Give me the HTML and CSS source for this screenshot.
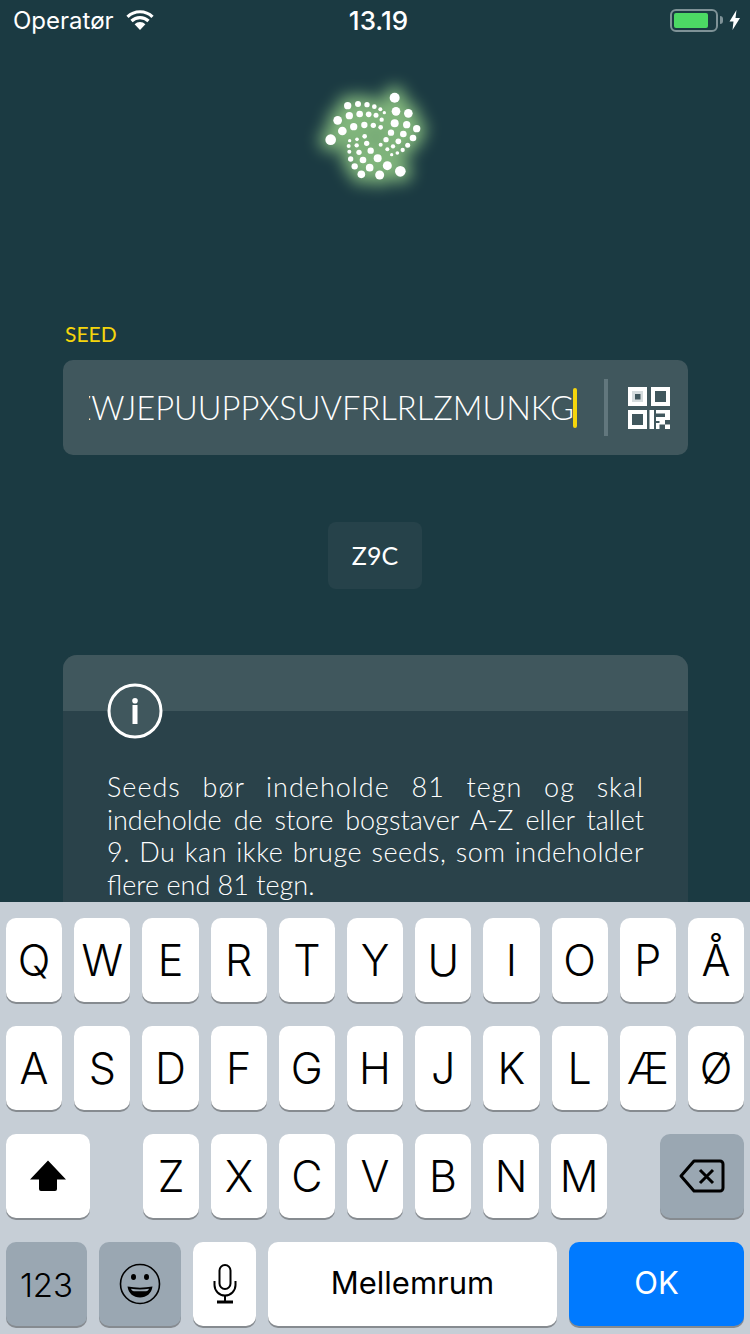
FILE: index.html
```html
<!DOCTYPE html>
<html lang="da">
<head>
    <meta charset="UTF-8">
    <meta name="viewport" content="width=device-width, initial-scale=1.0">
    <title>Seed</title>
    <link rel="stylesheet" href="styles.css">
</head>
<body>
    <div class="screen">
        <div class="statusbar">
            <div class="status-left">
                <span>Operatør</span>
                <svg class="wifi" width="28" height="20" viewBox="0 0 28 20">
                    <path d="M14 20 8.600 14.200a7.600 7.600 0 0 1 10.800 0z" fill="#fff"/>
                    <path d="M1.500 6.800a18 18 0 0 1 25 0M5.500 11a12.300 12.300 0 0 1 17 0" fill="none" stroke="#fff" stroke-width="3.200"/>
                </svg>
            </div>
            <div class="status-time">13.19</div>
            <div class="status-right">
                <div class="battery"><div class="battery-fill"></div></div>
                <div class="battery-tip"></div>
                <svg class="bolt" width="12" height="20" viewBox="0 0 12 20">
                    <path d="M7.500 0 .5 11.500h4L3.500 20 11 8H6.500z" fill="#fff"/>
                </svg>
            </div>
        </div>

        <div class="logo">
            <!-- viewBox i 3x enheder -->
            <svg width="150" height="130" viewBox="0 0 450 390">
                <g id="logoGlow" class="logo-glow"></g>
                <g id="logoDots" class="logo-dots"></g>
            </svg>
        </div>

        <div class="seed-label">SEED</div>
        <div class="seed-box">
            <div class="seed-value"><span>ZWJEPUUPPXSUVFRLRLZMUNKG</span></div>
            <div class="caret"></div>
            <div class="seed-divider"></div>
            <svg class="qr" width="42" height="42" viewBox="0 0 42 42" fill="#fff">
                <path fill-rule="evenodd" d="M0 0h19v19H0zM23 0h19v19H23zM27 4v11h11V4zM0 23h19v19H0zM4 27v11h11V27z"/>
                <path d="M4 4h11v11H4z" fill="#d5dcde"/>
                <path d="M7 7h5.500v5.500H7z" fill="#40575d"/>
                <path d="M21.500 23h4.500v19h-4.500zM28 23h9v3.500h-9zM37 23h5v10h-5zM28 30h9v4h-9zM28 36h3.500v6H28zM31.500 34H37v3.500h-5.500zM37 37.500h5V42h-5z"/>
            </svg>
        </div>

        <div class="checksum-row">
            <div class="checksum">Z9C</div>
        </div>

        <div class="info-card">
            <div class="info-head">
                <svg class="info-icon" width="56" height="56" viewBox="0 0 56 56">
                    <circle cx="28" cy="28" r="26" fill="#40575d" stroke="#fff" stroke-width="3"/>
                    <circle cx="28" cy="17.700" r="2.800" fill="#fff"/>
                    <rect x="25.500" y="22" width="5" height="19" fill="#fff"/>
                </svg>
            </div>
            <p class="info-text">
                <span class="info-line line-wide">Seeds bør indeholde 81 tegn og skal</span>
                <span class="info-line">indeholde de store bogstaver A-Z eller tallet</span>
                <span class="info-line line-mid">9. Du kan ikke bruge seeds, som indeholder</span>
                <span class="info-line line-last">flere end 81 tegn.</span>
            </p>
        </div>

        <div class="keyboard">
            <div class="kb-row">
                <div class="key">Q</div><div class="key">W</div><div class="key">E</div><div class="key">R</div><div class="key">T</div>
                <div class="key">Y</div><div class="key">U</div><div class="key">I</div><div class="key">O</div><div class="key">P</div><div class="key">Å</div>
            </div>
            <div class="kb-row">
                <div class="key">A</div><div class="key">S</div><div class="key">D</div><div class="key">F</div><div class="key">G</div>
                <div class="key">H</div><div class="key">J</div><div class="key">K</div><div class="key">L</div><div class="key">Æ</div><div class="key">Ø</div>
            </div>
            <div class="kb-row">
                <div class="key key-shift">
                    <svg width="38" height="32" viewBox="0 0 38 32"><path d="M19 .5 37 19.500H28v9.500a2 2 0 0 1-2 2H12a2 2 0 0 1-2-2v-9.500H1z" fill="#000"/></svg>
                </div>
                <div class="letters">
                    <div class="key">Z</div><div class="key">X</div><div class="key">C</div><div class="key">V</div><div class="key">B</div><div class="key">N</div><div class="key">M</div>
                </div>
                <div class="key key-back">
                    <svg width="46" height="34" viewBox="0 0 46 34" fill="none" stroke="#000" stroke-width="3">
                        <path d="M15 2h26a3 3 0 0 1 3 3v24a3 3 0 0 1-3 3H15L2 17z" stroke-linejoin="round"/>
                        <path d="M21 11 34 24M34 11 21 24"/>
                    </svg>
                </div>
            </div>
            <div class="kb-row">
                <div class="key key-dark key-123">123</div>
                <div class="key key-dark key-emoji">
                    <svg width="42" height="42" viewBox="0 0 42 42">
                        <circle cx="21" cy="21" r="19.500" fill="none" stroke="#000" stroke-width="1.600"/>
                        <ellipse cx="14.500" cy="14" rx="2.500" ry="3"/>
                        <ellipse cx="27.500" cy="14" rx="2.500" ry="3"/>
                        <path d="M8.500 23.500c8 1.500 17 1.500 25 0-1 7-6 11-12.500 11S9.500 30.500 8.500 23.500z"/>
                        <path d="M12 25.800c6 .8 12 .8 18 0-.5 1.500-1.500 2.400-3 2.500H15c-1.500-.1-2.500-1-3-2.500z" fill="#9aa7b2"/>
                    </svg>
                </div>
                <div class="key key-mic">
                    <svg width="24" height="40" viewBox="0 0 24 40" fill="none" stroke="#000" stroke-width="2">
                        <rect x="6.500" y="1" width="11" height="24" rx="5.500"/>
                        <path d="M1.500 17v4a10.500 10.500 0 0 0 21 0v-4M12 31.500V37"/>
                        <path d="M4 38h16" stroke-width="3"/>
                    </svg>
                </div>
                <div class="key key-space">Mellemrum</div>
                <div class="key key-ok">OK</div>
            </div>
        </div>
    </div>

    <script>
        // prikkerne i logoet: x, y, radius
        var prikker = [
            [284,83,15],[143,107,11],[174,102,9],[201,104,8],[223,110,7],[241,118,6],[253,128,5],
            [288,124,13],[325,130,13],[113,151,13],[148,137,11],[179,132,10],[206,133,8.5],[228,136,7.5],[245,149,6.5],
            [284,160,12],[320,164,11],[350,176,11],[127,183,13],[161,170,11],[193,165,9.5],[220,166,8],[242,172,7],
            [273,188,9.5],[310,192,10],[339,204,10],[92,209,16],[258,209,8],[295,214,8.5],[323,226,7.5],
            [171,208,5.5],[149,212,5],[194,199,7],[200,220,8],[146,228,6],[170,226,6.5],
            [242,224,6],[262,238,6],[279,229,6.5],[308,240,6.5],[292,249,5.5],[275,254,5],
            [148,245,6],[177,247,8],[212,242,9.5],[152,267,8],[189,270,10],[233,265,12],
            [164,289,9.5],[209,293,11.5],[262,287,13.5],[184,313,11.5],[239,315,13.5],[301,304,16]
        ];
        var cirkler = "";
        prikker.forEach(function (p) {
            cirkler += `<circle cx="${p[0]}" cy="${p[1]}" r="${p[2]}"/>`;
        });
        document.getElementById("logoGlow").innerHTML = cirkler;
        document.getElementById("logoDots").innerHTML = cirkler;
    </script>
</body>
</html>
```

FILE: styles.css
```css
* {
    box-sizing: border-box;
}
html, body {
    margin: 0;
    height: 100%;
}
body {
    font-family: "Liberation Sans", Arial, sans-serif;
    background-color: #1b3a42;
    overflow: hidden;
}
.screen {
    position: relative;
    width: 750px;
    height: 1334px;
    overflow: hidden;
    background-color: #1b3a42;
}

/* statusbar */
.statusbar {
    height: 40px;
    padding: 0 6px 0 13px;
    display: grid;
    grid-template-columns: 1fr auto 1fr;
    align-items: center;
    color: white;
    font-family: Inter, sans-serif;
    font-size: 24px;
    font-weight: 400;
}
.status-left {
    display: flex;
    align-items: center;
    gap: 12px;
}
.status-time {
    font-size: 26px;
    font-weight: 500;
}
.status-right {
    display: flex;
    align-items: center;
    justify-content: flex-end;
}
.battery {
    width: 48px;
    height: 23px;
    padding: 2px;
    border: 2px solid #7f9297;
    border-radius: 6px;
}
.battery-fill {
    width: 34px;
    height: 100%;
    border-radius: 2px;
    background-color: #4cd964;
}
.battery-tip {
    width: 3px;
    height: 8px;
    margin: 0 6px 0 2px;
    border-radius: 0 3px 3px 0;
    background-color: #7f9297;
}
.bolt {
    margin-right: 3px;
}

/* logo */
.logo {
    height: 130px;
    margin-top: 30px;
    display: flex;
    justify-content: center;
}
.logo svg {
    overflow: visible;
}
.logo-glow {
    fill: #a9e693;
    stroke: #a9e693;
    stroke-width: 36px;
    opacity: 0.72;
    filter: blur(24px);
}
.logo-dots {
    fill: white;
}

/* seed */
.seed-label {
    margin: 120px 0 0 65px;
    height: 40px;
    line-height: 28px;
    font-family: Lato, sans-serif;
    font-size: 21px;
    color: #f5d50c;
}
.seed-box {
    width: 625px;
    height: 95px;
    margin: 0 0 0 63px;
    padding: 0 18px 0 26px;
    display: flex;
    align-items: center;
    border-radius: 10px;
    background-color: #40575d;
}
.seed-value {
    width: 486px;
    height: 50px;
    overflow: hidden;
    display: flex;
    justify-content: flex-end;
    line-height: 50px;
    font-family: Lato, sans-serif;
    font-weight: 300;
    font-size: 32.700px;
    color: white;
    white-space: nowrap;
}
.caret {
    width: 4px;
    height: 40px;
    margin-left: -1px;
    border-radius: 2px;
    background-color: #f5d50c;
}
.seed-divider {
    width: 4px;
    height: 57px;
    margin: 0 20px 0 27px;
    background-color: #62777d;
}
.qr {
    flex: none;
}

/* checksum */
.checksum-row {
    margin-top: 67px;
    display: flex;
    justify-content: center;
}
.checksum {
    width: 94px;
    height: 67px;
    line-height: 67px;
    border-radius: 8px;
    background-color: #26424a;
    color: white;
    text-align: center;
    font-family: Lato, sans-serif;
    font-size: 25px;
}

/* info */
.info-card {
    width: 625px;
    height: 300px;
    margin: 66px 0 0 63px;
    border-radius: 14px;
    background-color: #2a424a;
    overflow: hidden;
}
.info-head {
    height: 56px;
    padding: 28px 0 0 44px;
    background-color: #40575d;
}
.info-icon {
    display: block;
}
.info-text {
    margin: 60px 44px 0 44px;
    font-family: Lato, sans-serif;
    font-weight: 300;
    font-size: 27px;
    line-height: 32.700px;
    color: white;
}
.info-line {
    display: block;
    white-space: nowrap;
    text-align: justify;
    text-align-last: justify;
}
.line-wide {
    letter-spacing: 1px;
}
.line-mid {
    letter-spacing: 0.5px;
}
.line-last {
    text-align-last: left;
}

/* tastatur */
.keyboard {
    position: absolute;
    left: 0;
    top: 902px;
    width: 750px;
    height: 432px;
    padding: 16px 6px 0;
    background-color: #c6ced6;
    font-family: Inter, "Liberation Sans", sans-serif;
    color: black;
}
.kb-row {
    display: flex;
    gap: 12px;
    height: 84px;
    margin-bottom: 24px;
}
.letters {
    display: flex;
    gap: 12px;
    margin: 0 41px;
}
.letters .key {
    width: 56px;
}
.key {
    flex: 1;
    height: 84px;
    display: flex;
    align-items: center;
    justify-content: center;
    border-radius: 10px;
    background-color: white;
    box-shadow: 0 2px 0 #868b90;
    font-size: 43px;
    font-weight: 300;
}
.key-shift, .key-back {
    flex: none;
    width: 84px;
}
.key-back, .key-dark {
    background-color: #9aa7b2;
}
.key-123 {
    flex: none;
    width: 81px;
    padding-top: 2px;
    font-size: 33px;
}
.key-emoji {
    flex: none;
    width: 82px;
}
.key-mic {
    flex: none;
    width: 63px;
}
.key-space {
    flex: none;
    width: 289px;
    padding-bottom: 3px;
    font-size: 31px;
    font-weight: 400;
}
.key-ok {
    flex: none;
    width: 175px;
    padding-bottom: 3px;
    background-color: #007aff;
    color: white;
    font-size: 31px;
    font-weight: 400;
}
```
